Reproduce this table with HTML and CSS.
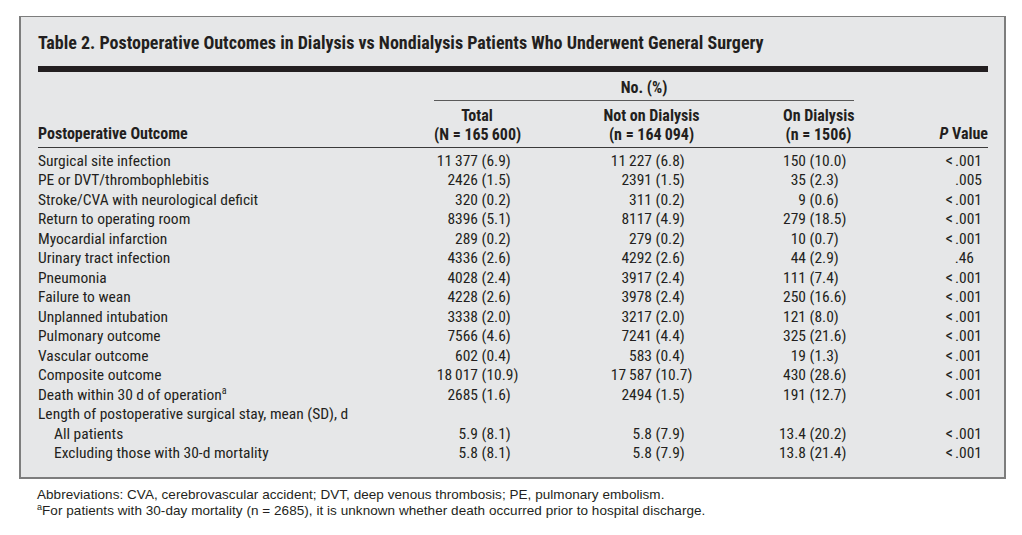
FILE: index.html
```html
<!DOCTYPE html>
<html lang="en">
<head>
<meta charset="utf-8">
<title>Table 2</title>
<link rel="stylesheet" href="styles.css">
</head>
<body>
<div class="page">
  <div class="panel">
    <h1 class="title">Table 2. Postoperative Outcomes in Dialysis vs Nondialysis Patients Who Underwent General Surgery</h1>
    <div class="rule"></div>
    <table class="data">
      <colgroup>
        <col class="c-label"><col class="c-total"><col class="c-not"><col class="c-on"><col class="c-p">
      </colgroup>
      <thead>
        <tr class="hrow-a">
          <th class="h-label" rowspan="2">Postoperative Outcome</th>
          <th class="h-group" colspan="3">No. (%)</th>
          <th class="h-p" rowspan="2"><i>P</i> Value</th>
        </tr>
        <tr class="hrow-b">
          <th class="h-total">Total<br>(N = 165&thinsp;600)</th>
          <th class="h-not">Not on Dialysis<br>(n = 164&thinsp;094)</th>
          <th class="h-on">On Dialysis<br>(n = 1506)</th>
        </tr>
      </thead>
      <tbody>
        <tr class="first"><td>Surgical site infection</td><td class="n t"><span class="c">11&thinsp;377</span> (6.9)</td><td class="n d"><span class="c">11&thinsp;227</span> (6.8)</td><td class="n o"><span class="c">150</span> (10.0)</td><td class="p"><span class="lt">&lt;</span>.001</td></tr>
        <tr><td>PE or DVT/thrombophlebitis</td><td class="n t"><span class="c">2426</span> (1.5)</td><td class="n d"><span class="c">2391</span> (1.5)</td><td class="n o"><span class="c">35</span> (2.3)</td><td class="p">.005</td></tr>
        <tr><td>Stroke/CVA with neurological deficit</td><td class="n t"><span class="c">320</span> (0.2)</td><td class="n d"><span class="c">311</span> (0.2)</td><td class="n o"><span class="c">9</span> (0.6)</td><td class="p"><span class="lt">&lt;</span>.001</td></tr>
        <tr><td>Return to operating room</td><td class="n t"><span class="c">8396</span> (5.1)</td><td class="n d"><span class="c">8117</span> (4.9)</td><td class="n o"><span class="c">279</span> (18.5)</td><td class="p"><span class="lt">&lt;</span>.001</td></tr>
        <tr><td>Myocardial infarction</td><td class="n t"><span class="c">289</span> (0.2)</td><td class="n d"><span class="c">279</span> (0.2)</td><td class="n o"><span class="c">10</span> (0.7)</td><td class="p"><span class="lt">&lt;</span>.001</td></tr>
        <tr><td>Urinary tract infection</td><td class="n t"><span class="c">4336</span> (2.6)</td><td class="n d"><span class="c">4292</span> (2.6)</td><td class="n o"><span class="c">44</span> (2.9)</td><td class="p"><span class="short">.46</span></td></tr>
        <tr><td>Pneumonia</td><td class="n t"><span class="c">4028</span> (2.4)</td><td class="n d"><span class="c">3917</span> (2.4)</td><td class="n o"><span class="c">111</span> (7.4)</td><td class="p"><span class="lt">&lt;</span>.001</td></tr>
        <tr><td>Failure to wean</td><td class="n t"><span class="c">4228</span> (2.6)</td><td class="n d"><span class="c">3978</span> (2.4)</td><td class="n o"><span class="c">250</span> (16.6)</td><td class="p"><span class="lt">&lt;</span>.001</td></tr>
        <tr><td>Unplanned intubation</td><td class="n t"><span class="c">3338</span> (2.0)</td><td class="n d"><span class="c">3217</span> (2.0)</td><td class="n o"><span class="c">121</span> (8.0)</td><td class="p"><span class="lt">&lt;</span>.001</td></tr>
        <tr><td>Pulmonary outcome</td><td class="n t"><span class="c">7566</span> (4.6)</td><td class="n d"><span class="c">7241</span> (4.4)</td><td class="n o"><span class="c">325</span> (21.6)</td><td class="p"><span class="lt">&lt;</span>.001</td></tr>
        <tr><td>Vascular outcome</td><td class="n t"><span class="c">602</span> (0.4)</td><td class="n d"><span class="c">583</span> (0.4)</td><td class="n o"><span class="c">19</span> (1.3)</td><td class="p"><span class="lt">&lt;</span>.001</td></tr>
        <tr><td>Composite outcome</td><td class="n t"><span class="c">18&thinsp;017</span> (10.9)</td><td class="n d"><span class="c">17&thinsp;587</span> (10.7)</td><td class="n o"><span class="c">430</span> (28.6)</td><td class="p"><span class="lt">&lt;</span>.001</td></tr>
        <tr><td>Death within 30 d of operation<sup>a</sup></td><td class="n t"><span class="c">2685</span> (1.6)</td><td class="n d"><span class="c">2494</span> (1.5)</td><td class="n o"><span class="c">191</span> (12.7)</td><td class="p"><span class="lt">&lt;</span>.001</td></tr>
        <tr><td colspan="5">Length of postoperative surgical stay, mean (SD), d</td></tr>
        <tr><td class="sub">All patients</td><td class="n t"><span class="c">5.9</span> (8.1)</td><td class="n d"><span class="c">5.8</span> (7.9)</td><td class="n o"><span class="c">13.4</span> (20.2)</td><td class="p"><span class="lt">&lt;</span>.001</td></tr>
        <tr class="last"><td class="sub">Excluding those with 30-d mortality</td><td class="n t"><span class="c">5.8</span> (8.1)</td><td class="n d"><span class="c">5.8</span> (7.9)</td><td class="n o"><span class="c">13.8</span> (21.4)</td><td class="p"><span class="lt">&lt;</span>.001</td></tr>
      </tbody>
    </table>
  </div>
  <div class="notes">
    <p>Abbreviations: CVA, cerebrovascular accident; DVT, deep venous thrombosis; PE, pulmonary embolism.</p>
    <p><sup>a</sup>For patients with 30-day mortality (n = 2685), it is unknown whether death occurred prior to hospital discharge.</p>
  </div>
</div>
</body>
</html>
```

FILE: styles.css
```css
html, body {
  margin: 0;
  padding: 0;
  background: #ffffff;
}

body {
  font-family: "Roboto Condensed", "Liberation Sans", Arial, sans-serif;
  color: #231f20;
}

.page {
  padding: 16px 0 0 19px;
  width: 987px;
}

.panel {
  background: #e6e7e8;
  border: 2px solid #7d7d7d;
  border-top-width: 1px;
  padding: 15px 16px 13px 17px;
}

.title {
  margin: 0;
  font-size: 18px;
  line-height: 22px;
  font-weight: bold;
}

.rule {
  height: 6px;
  background: #231f20;
  margin-top: 12px;
}

.data {
  width: 950px;
  border-collapse: collapse;
  table-layout: fixed;
  font-size: 15.5px;
  line-height: 19.5px;
}

.c-label { width: 396px; }
.c-total { width: 128px; }
.c-not { width: 179px; }
.c-on { width: 113px; }
.c-p { width: 134px; }

th, td {
  padding: 0;
  white-space: nowrap;
}

th {
  font-size: 16px;
  font-weight: bold;
  line-height: 20px;
  vertical-align: bottom;
}

.hrow-b th {
  padding: 5px 0 3px;
  line-height: 19px;
  text-align: center;
  border-bottom: 1px solid #3a3a3a;
}

.h-label {
  text-align: left;
  padding: 0 0 3px;
  border-bottom: 1px solid #3a3a3a;
}

.h-p {
  text-align: right;
  padding: 0 0 3px;
  border-bottom: 1px solid #3a3a3a;
}

.h-p i {
  font-style: italic;
}

.h-group {
  text-align: center;
  padding: 6px 0 2px;
  border-bottom: 1px solid #5a5a5a;
}

.hrow-b .h-total { padding-right: 42px; }
.hrow-b .h-on { padding-left: 42px; }

td {
  text-align: left;
  vertical-align: baseline;
}

.first td { padding-top: 3.5px; }

.sub { padding-left: 16px; }

.n .c {
  display: inline-block;
  text-align: right;
}

.t .c { width: 44px; }
.d .c { width: 90px; }
.o .c { width: 65px; }

.p {
  text-align: right;
  padding-right: 6px;
}

.lt {
  font-size: 17px;
  line-height: 0;
  margin-right: 2px;
}

.short {
  padding-right: 8px;
}

sup {
  font-size: 10px;
  line-height: 0;
  vertical-align: 6px;
}

.notes {
  padding: 8px 0 0 18px;
  font-family: "Liberation Sans", Arial, sans-serif;
  font-size: 13.5px;
  line-height: 16px;
  letter-spacing: 0.05px;
}

.notes p {
  margin: 0;
}

.notes sup {
  font-size: 9px;
  vertical-align: 5px;
}
```
